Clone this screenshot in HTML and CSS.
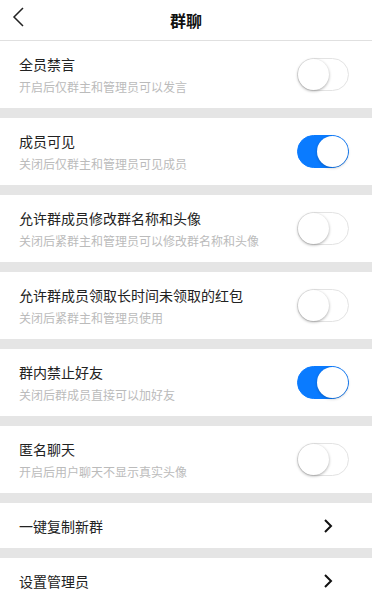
FILE: index.html
```html
<!DOCTYPE html>
<html lang="zh">
<head>
    <meta charset="UTF-8">
    <meta name="viewport" content="width=device-width, initial-scale=1.0">
    <title>群聊</title>
    <link rel="stylesheet" href="styles.css">
</head>
<body>
    <div class="header">
        <a class="back" href="#">
            <svg width="12" height="20" viewBox="0 0 12 20"><path d="M11 1 L2 10 L11 19" fill="none" stroke="#222" stroke-width="1.5"/></svg>
        </a>
        <h1>群聊</h1>
    </div>

    <div class="section">
        <div class="row">
            <div class="text">
                <div class="title">全员禁言</div>
                <div class="desc">开启后仅群主和管理员可以发言</div>
            </div>
            <div class="switch"></div>
        </div>
    </div>

    <div class="section">
        <div class="row">
            <div class="text">
                <div class="title">成员可见</div>
                <div class="desc">关闭后仅群主和管理员可见成员</div>
            </div>
            <div class="switch on"></div>
        </div>
    </div>

    <div class="section">
        <div class="row">
            <div class="text">
                <div class="title">允许群成员修改群名称和头像</div>
                <div class="desc">关闭后紧群主和管理员可以修改群名称和头像</div>
            </div>
            <div class="switch"></div>
        </div>
    </div>

    <div class="section">
        <div class="row">
            <div class="text">
                <div class="title">允许群成员领取长时间未领取的红包</div>
                <div class="desc">关闭后紧群主和管理员使用</div>
            </div>
            <div class="switch"></div>
        </div>
    </div>

    <div class="section">
        <div class="row">
            <div class="text">
                <div class="title">群内禁止好友</div>
                <div class="desc">关闭后群成员直接可以加好友</div>
            </div>
            <div class="switch on"></div>
        </div>
    </div>

    <div class="section">
        <div class="row">
            <div class="text">
                <div class="title">匿名聊天</div>
                <div class="desc">开启后用户聊天不显示真实头像</div>
            </div>
            <div class="switch"></div>
        </div>
    </div>

    <div class="section">
        <a class="link-row" href="#">
            <span class="title">一键复制新群</span>
            <svg class="arrow" width="10" height="14" viewBox="0 0 10 14"><path d="M2 1 L8 7 L2 13" fill="none" stroke="#111" stroke-width="2"/></svg>
        </a>
    </div>

    <div class="section last">
        <a class="link-row" href="#">
            <span class="title">设置管理员</span>
            <svg class="arrow" width="10" height="14" viewBox="0 0 10 14"><path d="M2 1 L8 7 L2 13" fill="none" stroke="#111" stroke-width="2"/></svg>
        </a>
    </div>
</body>
</html>
```

FILE: styles.css
```css
body {
    font-family: "Noto Sans CJK SC", "Noto Sans", sans-serif;
    background: #e5e5e5;
    color: #222;
    margin: 0;
}
.header {
    height: 40px;
    background: #fff;
    border-bottom: 1px solid #e0e0e0;
    display: flex;
    align-items: center;
    justify-content: center;
    position: relative;
}
.header h1 {
    margin: 0;
    font-size: 16px;
    font-weight: bold;
    color: #111;
}
.back {
    position: absolute;
    left: 12px;
    top: 7px;
    display: flex;
}
.section {
    background: #fff;
    margin-bottom: 10px;
}
.section.last {
    margin-bottom: 0;
    padding-bottom: 20px;
}
.row {
    height: 67px;
    display: flex;
    align-items: center;
    justify-content: space-between;
    padding: 0 23px 0 19px;
}
.title {
    font-size: 14px;
    line-height: 20px;
    color: #222;
}
.desc {
    font-size: 12px;
    line-height: 16px;
    color: #bbb;
    margin-top: 5px;
}
.switch {
    width: 50px;
    height: 31px;
    border: 1px solid #e3e3e3;
    border-radius: 17px;
    background: #fff;
    position: relative;
    flex-shrink: 0;
}
.switch::after {
    content: "";
    position: absolute;
    left: 0;
    top: 0;
    width: 31px;
    height: 31px;
    border-radius: 50%;
    background: #fff;
    box-shadow: 0 1px 3px rgba(0, 0, 0, 0.35);
}
.switch.on {
    background: #0a7bff;
    border-color: #0a7bff;
}
.switch.on::after {
    left: 19px;
    box-shadow: 0 1px 3px rgba(0, 0, 0, 0.25);
}
.link-row {
    height: 45px;
    display: flex;
    align-items: center;
    justify-content: space-between;
    padding: 0 39px 0 19px;
    text-decoration: none;
}
.arrow {
    display: block;
}
```
